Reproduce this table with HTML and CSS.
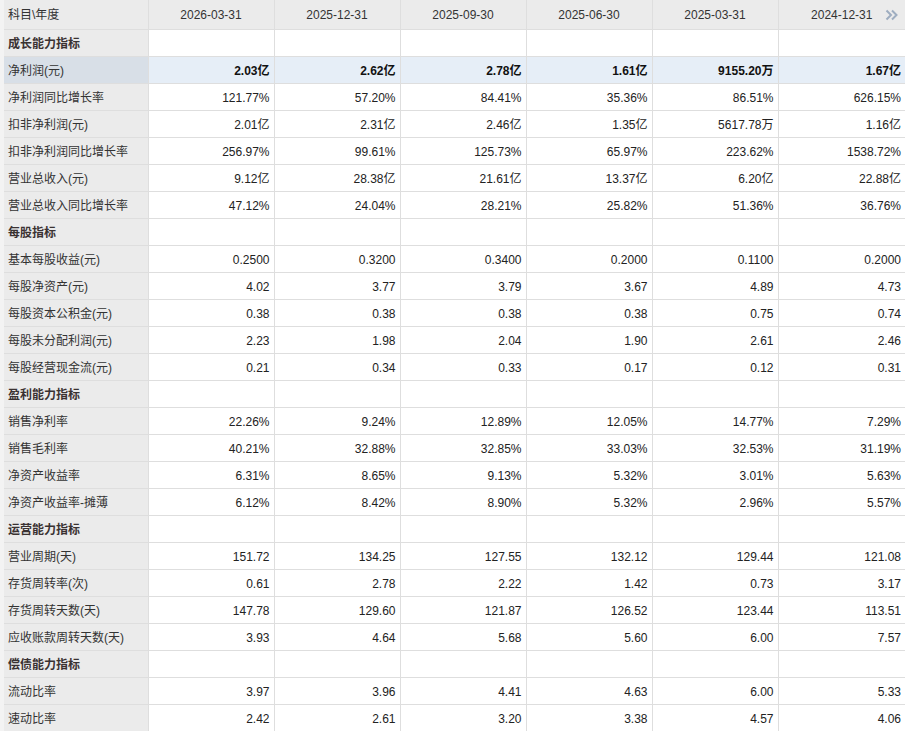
FILE: index.html
```html
<!DOCTYPE html>
<html lang="zh-CN">
<head>
<meta charset="utf-8">
<title>财务指标</title>
<link rel="stylesheet" href="styles.css">
</head>
<body>
<table class="fin">
  <colgroup>
    <col class="c-name"><col class="c-val"><col class="c-val"><col class="c-val"><col class="c-val"><col class="c-val"><col class="c-last">
  </colgroup>
  <thead>
    <tr class="head">
      <th class="name">科目\年度</th>
      <th>2026-03-31</th>
      <th>2025-12-31</th>
      <th>2025-09-30</th>
      <th>2025-06-30</th>
      <th>2025-03-31</th>
      <th class="last"><span class="date">2024-12-31</span><span class="more"><svg width="14" height="12" viewBox="0 0 14 12"><path d="M1.5 1.5 L6 6 L1.5 10.5 M7 1.5 L11.5 6 L7 10.5" fill="none" stroke="#9eadc0" stroke-width="2"/></svg></span></th>
    </tr>
  </thead>
  <tbody>
    <tr class="sec"><td class="name">成长能力指标</td><td></td><td></td><td></td><td></td><td></td><td></td></tr>
    <tr class="hl"><td class="name">净利润(元)</td><td>2.03亿</td><td>2.62亿</td><td>2.78亿</td><td>1.61亿</td><td>9155.20万</td><td>1.67亿</td></tr>
    <tr><td class="name">净利润同比增长率</td><td>121.77%</td><td>57.20%</td><td>84.41%</td><td>35.36%</td><td>86.51%</td><td>626.15%</td></tr>
    <tr><td class="name">扣非净利润(元)</td><td>2.01亿</td><td>2.31亿</td><td>2.46亿</td><td>1.35亿</td><td>5617.78万</td><td>1.16亿</td></tr>
    <tr><td class="name">扣非净利润同比增长率</td><td>256.97%</td><td>99.61%</td><td>125.73%</td><td>65.97%</td><td>223.62%</td><td>1538.72%</td></tr>
    <tr><td class="name">营业总收入(元)</td><td>9.12亿</td><td>28.38亿</td><td>21.61亿</td><td>13.37亿</td><td>6.20亿</td><td>22.88亿</td></tr>
    <tr><td class="name">营业总收入同比增长率</td><td>47.12%</td><td>24.04%</td><td>28.21%</td><td>25.82%</td><td>51.36%</td><td>36.76%</td></tr>
    <tr class="sec"><td class="name">每股指标</td><td></td><td></td><td></td><td></td><td></td><td></td></tr>
    <tr><td class="name">基本每股收益(元)</td><td>0.2500</td><td>0.3200</td><td>0.3400</td><td>0.2000</td><td>0.1100</td><td>0.2000</td></tr>
    <tr><td class="name">每股净资产(元)</td><td>4.02</td><td>3.77</td><td>3.79</td><td>3.67</td><td>4.89</td><td>4.73</td></tr>
    <tr><td class="name">每股资本公积金(元)</td><td>0.38</td><td>0.38</td><td>0.38</td><td>0.38</td><td>0.75</td><td>0.74</td></tr>
    <tr><td class="name">每股未分配利润(元)</td><td>2.23</td><td>1.98</td><td>2.04</td><td>1.90</td><td>2.61</td><td>2.46</td></tr>
    <tr><td class="name">每股经营现金流(元)</td><td>0.21</td><td>0.34</td><td>0.33</td><td>0.17</td><td>0.12</td><td>0.31</td></tr>
    <tr class="sec"><td class="name">盈利能力指标</td><td></td><td></td><td></td><td></td><td></td><td></td></tr>
    <tr><td class="name">销售净利率</td><td>22.26%</td><td>9.24%</td><td>12.89%</td><td>12.05%</td><td>14.77%</td><td>7.29%</td></tr>
    <tr><td class="name">销售毛利率</td><td>40.21%</td><td>32.88%</td><td>32.85%</td><td>33.03%</td><td>32.53%</td><td>31.19%</td></tr>
    <tr><td class="name">净资产收益率</td><td>6.31%</td><td>8.65%</td><td>9.13%</td><td>5.32%</td><td>3.01%</td><td>5.63%</td></tr>
    <tr><td class="name">净资产收益率-摊薄</td><td>6.12%</td><td>8.42%</td><td>8.90%</td><td>5.32%</td><td>2.96%</td><td>5.57%</td></tr>
    <tr class="sec"><td class="name">运营能力指标</td><td></td><td></td><td></td><td></td><td></td><td></td></tr>
    <tr><td class="name">营业周期(天)</td><td>151.72</td><td>134.25</td><td>127.55</td><td>132.12</td><td>129.44</td><td>121.08</td></tr>
    <tr><td class="name">存货周转率(次)</td><td>0.61</td><td>2.78</td><td>2.22</td><td>1.42</td><td>0.73</td><td>3.17</td></tr>
    <tr><td class="name">存货周转天数(天)</td><td>147.78</td><td>129.60</td><td>121.87</td><td>126.52</td><td>123.44</td><td>113.51</td></tr>
    <tr><td class="name">应收账款周转天数(天)</td><td>3.93</td><td>4.64</td><td>5.68</td><td>5.60</td><td>6.00</td><td>7.57</td></tr>
    <tr class="sec"><td class="name">偿债能力指标</td><td></td><td></td><td></td><td></td><td></td><td></td></tr>
    <tr><td class="name">流动比率</td><td>3.97</td><td>3.96</td><td>4.41</td><td>4.63</td><td>6.00</td><td>5.33</td></tr>
    <tr><td class="name">速动比率</td><td>2.42</td><td>2.61</td><td>3.20</td><td>3.38</td><td>4.57</td><td>4.06</td></tr>
  </tbody>
</table>
</body>
</html>
```
FILE: styles.css
```css
html, body {
  margin: 0;
  padding: 0;
  background: #ffffff;
}

body {
  font-family: "Liberation Sans", "Noto Sans CJK SC", sans-serif;
  font-size: 12px;
  color: #222;
  border-left: 4px solid #f3f3f3;
  width: 901px;
}

.fin {
  border-collapse: collapse;
  table-layout: fixed;
  width: 901px;
}

.c-name { width: 144px; }
.c-val { width: 126px; }
.c-last { width: 127px; }

.fin th,
.fin td {
  border: 1px solid #dedede;
  padding: 1px 4px 0 0;
  height: 25px;
  text-align: right;
  white-space: nowrap;
  overflow: hidden;
  line-height: 16px;
}

.fin tr:first-child td { border-top: none; }
.fin tbody tr:last-child td { border-bottom: none; }
.fin th:last-child, .fin td:last-child { border-right: none; }
.fin th:first-child, .fin td:first-child { border-left: none; }

.head th {
  background: #ebebeb;
  font-weight: normal;
  text-align: center;
  color: #333;
  height: 29px;
  border-top: none;
  padding: 0;
}

.head th.name {
  text-align: left;
  padding-left: 4px;
  color: #333;
}

.head th.last {
  position: relative;
}

.more {
  position: absolute;
  right: 6px;
  top: 9px;
  line-height: 0;
}

.fin td.name {
  background: #ebebeb;
  text-align: left;
  padding-left: 4px;
  color: #333;
}

.sec td.name {
  font-weight: bold;
  color: #3a3232;
}

.hl td {
  background: #e6eef7;
  font-weight: bold;
  color: #111;
}

.hl td.name {
  background: #d8dfe7;
  font-weight: normal;
  color: #333;
}
```
